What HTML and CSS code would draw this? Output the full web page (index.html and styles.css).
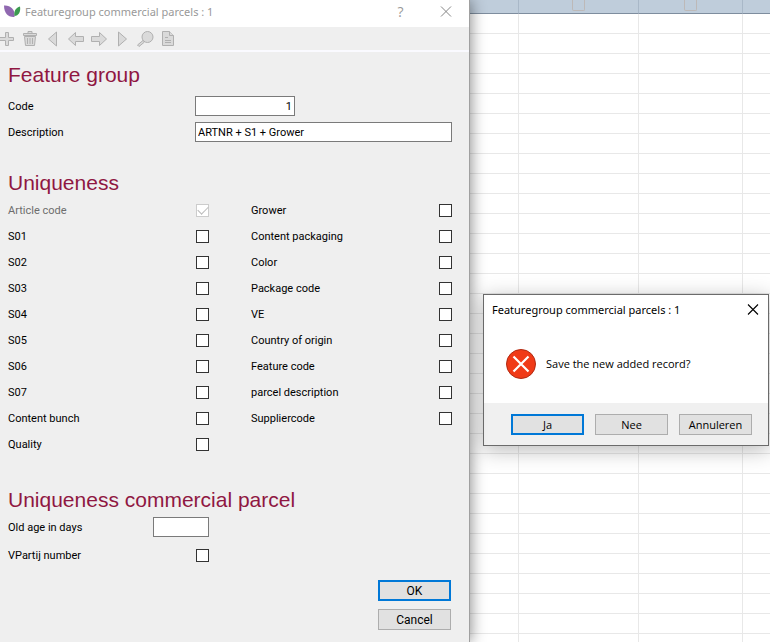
FILE: index.html
```
<!DOCTYPE html>
<html lang="en">
<head>
<meta charset="utf-8">
<title>Featuregroup commercial parcels : 1</title>
<link rel="stylesheet" href="styles.css">
</head>
<body>
<div class="desktop">
  <main class="window">
    <header class="titlebar">
      <svg class="logo" width="17" height="13" viewBox="0 0 17 13" aria-hidden="true">
        <path d="M0 0.500C6 0 11.500 4 10.500 12C4 12.500 0 8 0 0.500Z" fill="#9068b0"/>
        <path d="M16 1.500C17 6.500 14.500 11 10.500 11C9.500 6 12 2.500 16 1.500Z" fill="#3c9b50"/>
      </svg>
      <h1 class="title">Featuregroup commercial parcels : 1</h1>
      <button class="caption-btn help" type="button">?</button>
      <button class="caption-btn" type="button" aria-label="Close">
        <svg width="12" height="12" viewBox="0 0 12 12"><path d="M1 .500l10 10M11 .500l-10 10" fill="none" stroke="#858585"/></svg>
      </button>
    </header>
    <nav class="toolbar" aria-label="Record">
      <button type="button" aria-label="Add"><svg viewBox="0 0 15 16"><path d="M5.500 1.500h3v5h5v3h-5v5h-3v-5h-6v-3h6z"/></svg></button>
      <button type="button" aria-label="Delete"><svg viewBox="0 0 15 16"><path d="M1.500 5.500h11l-1 9h-9z"/><path d="M.5 2.500h13v2h-13zM5 2V.500h4V2M4.500 7v6M7 7v6M9.500 7v6"/></svg></button>
      <button type="button" aria-label="First"><svg viewBox="0 0 15 16"><path d="M10.500 1v14L2.500 8z"/></svg></button>
      <button type="button" aria-label="Previous"><svg viewBox="0 0 15 16"><path d="M-.5 8L6.500 1.500v4h8v5h-8v4z"/></svg></button>
      <button type="button" aria-label="Next"><svg viewBox="0 0 15 16"><path d="M14.500 8L7.500 1.500v4h-8v5h8v4z"/></svg></button>
      <button type="button" aria-label="Last"><svg viewBox="0 0 15 16"><path d="M3.500 1v14L11.500 8z"/></svg></button>
      <button type="button" aria-label="Search"><svg viewBox="0 0 15 16"><path d="M5 9.500L-.5 14l1.500 1.500L6.500 11z"/><circle cx="9.500" cy="6" r="5.500"/></svg></button>
      <button type="button" aria-label="Report"><svg viewBox="0 0 15 16"><path d="M1.500.500h7l4 4v10h-11z"/><path d="M8.500.500v4h4M4 6.500h3M4 9.500h6M4 11.500h6"/></svg></button>
    </nav>
    <form class="form">
      <section class="group">
        <h2>Feature group</h2>
        <div class="pairs">
          <label for="code">Code</label><input class="box code" id="code" type="text" value="1">
          <label for="desc">Description</label><input class="box" id="desc" type="text" value="ARTNR + S1 + Grower">
        </div>
      </section>
      <section class="group unique">
        <h2>Uniqueness</h2>
        <div class="columns">
          <div class="column">
            <label class="row off">Article code<input type="checkbox" checked disabled></label>
            <label class="row">S01<input type="checkbox"></label>
            <label class="row">S02<input type="checkbox"></label>
            <label class="row">S03<input type="checkbox"></label>
            <label class="row">S04<input type="checkbox"></label>
            <label class="row">S05<input type="checkbox"></label>
            <label class="row">S06<input type="checkbox"></label>
            <label class="row">S07<input type="checkbox"></label>
            <label class="row">Content bunch<input type="checkbox"></label>
            <label class="row">Quality<input type="checkbox"></label>
          </div>
          <div class="column">
            <label class="row">Grower<input type="checkbox"></label>
            <label class="row">Content packaging<input type="checkbox"></label>
            <label class="row">Color<input type="checkbox"></label>
            <label class="row">Package code<input type="checkbox"></label>
            <label class="row">VE<input type="checkbox"></label>
            <label class="row">Country of origin<input type="checkbox"></label>
            <label class="row">Feature code<input type="checkbox"></label>
            <label class="row">parcel description<input type="checkbox"></label>
            <label class="row">Suppliercode<input type="checkbox"></label>
          </div>
        </div>
      </section>
      <section class="group parcel">
        <h2>Uniqueness commercial parcel</h2>
        <div class="columns">
          <div class="column">
            <label class="row">Old age in days<input class="box days" type="text"></label>
            <label class="row">VPartij number<input type="checkbox"></label>
          </div>
        </div>
      </section>
      <div class="actions">
        <button class="btn primary" type="button">OK</button>
        <button class="btn" type="button">Cancel</button>
      </div>
    </form>
  </main>

  <div class="sheet">
    <table>
      <colgroup><col class="c1"><col class="c2"><col class="c3"><col></colgroup>
      <thead><tr><th></th><th><input type="checkbox" aria-label="Select column"></th><th><input type="checkbox" aria-label="Select column"></th><th></th></tr></thead>
      <tbody>
        <tr><td></td><td></td><td></td><td></td></tr><tr><td></td><td></td><td></td><td></td></tr>
        <tr><td></td><td></td><td></td><td></td></tr><tr><td></td><td></td><td></td><td></td></tr>
        <tr><td></td><td></td><td></td><td></td></tr><tr><td></td><td></td><td></td><td></td></tr>
        <tr><td></td><td></td><td></td><td></td></tr><tr><td></td><td></td><td></td><td></td></tr>
        <tr><td></td><td></td><td></td><td></td></tr><tr><td></td><td></td><td></td><td></td></tr>
        <tr><td></td><td></td><td></td><td></td></tr><tr><td></td><td></td><td></td><td></td></tr>
        <tr><td></td><td></td><td></td><td></td></tr><tr><td></td><td></td><td></td><td></td></tr>
        <tr><td></td><td></td><td></td><td></td></tr><tr><td></td><td></td><td></td><td></td></tr>
        <tr><td></td><td></td><td></td><td></td></tr><tr><td></td><td></td><td></td><td></td></tr>
        <tr><td></td><td></td><td></td><td></td></tr><tr><td></td><td></td><td></td><td></td></tr>
        <tr><td></td><td></td><td></td><td></td></tr><tr><td></td><td></td><td></td><td></td></tr>
        <tr><td></td><td></td><td></td><td></td></tr><tr><td></td><td></td><td></td><td></td></tr>
        <tr><td></td><td></td><td></td><td></td></tr><tr><td></td><td></td><td></td><td></td></tr>
        <tr><td></td><td></td><td></td><td></td></tr><tr><td></td><td></td><td></td><td></td></tr>
        <tr><td></td><td></td><td></td><td></td></tr><tr><td></td><td></td><td></td><td></td></tr>
        <tr><td></td><td></td><td></td><td></td></tr><tr><td></td><td></td><td></td><td></td></tr>
      </tbody>
    </table>
    <div class="dialog" role="alertdialog" aria-labelledby="dlg-title" aria-describedby="dlg-text">
      <header class="dialog-head">
        <h2 id="dlg-title">Featuregroup commercial parcels : 1</h2>
        <button class="dialog-close" type="button" aria-label="Close">
          <svg width="12" height="12" viewBox="0 0 12 12"><path d="M1 .500l10 10M11 .500l-10 10" fill="none" stroke="#000" stroke-width="1.100"/></svg>
        </button>
      </header>
      <div class="dialog-body">
        <svg width="30" height="30" viewBox="0 0 30 30" aria-hidden="true">
          <circle cx="15" cy="15" r="14.500" fill="#f03a17" stroke="#b02a12"/>
          <path d="M7.500 7.500l15 15M22.500 7.500l-15 15" stroke="#fff" stroke-width="2.200"/>
        </svg>
        <p id="dlg-text">Save the new added record?</p>
      </div>
      <footer class="dialog-foot">
        <button class="btn primary" type="button">Ja</button>
        <button class="btn" type="button">Nee</button>
        <button class="btn" type="button">Annuleren</button>
      </footer>
    </div>
  </div>
</div>
</body>
</html>
```
FILE: styles.css
```
* { box-sizing: border-box; }

body {
  margin: 0;
  font: 11px/17px Roboto, "Liberation Sans", sans-serif;
  color: #000;
}

h1, h2, p { margin: 0; font-weight: 400; }
button, input { font: inherit; color: inherit; }
svg { display: block; overflow: visible; }

.desktop {
  display: grid;
  grid-template-columns: minmax(min-content, 469fr) 301fr;
  min-height: 100vh;
  overflow: hidden;
}

/* Feature group window */
.window {
  position: relative;
  z-index: 2;
  background: #efefef;
  box-shadow: 1px 0 0 #a0a0a0, 2px 0 14px rgba(0, 0, 0, 0.45);
}

.titlebar {
  display: flex;
  align-items: center;
  height: 27px;
  padding: 0 1px 4px 4px;
  background: #fff;
  color: #999;
}

.title {
  flex: 1;
  margin-left: 4px;
  font: 11px/16px "Noto Sans", "Open Sans", sans-serif;
}

.caption-btn {
  display: grid;
  place-items: center;
  width: 45px;
  height: 22px;
  padding: 0;
  border: 0;
  background: none;
}

.help { font: 14px/16px "Open Sans", sans-serif; }

.toolbar {
  display: flex;
  align-items: center;
  gap: 8px;
  height: 25px;
  border-bottom: 2px solid #fafaff;
}

.toolbar button {
  width: 15px;
  height: 16px;
  padding: 0;
  border: 0;
  background: none;
}

.toolbar svg {
  width: 15px;
  height: 16px;
  fill: #dadada;
  stroke: #b0b0b0;
}

.form { padding: 10px 17px 12px 8px; }

.group h2 {
  font: 21px/26px "Liberation Sans", Arial, sans-serif;
  color: #8f1742;
}

.unique { margin-top: 25px; }
.parcel { margin-top: 30px; }

.pairs {
  display: grid;
  grid-template-columns: 187px 1fr;
  grid-auto-rows: 26px;
  align-items: center;
  margin-top: 5px;
}

.box {
  width: 100%;
  height: 20px;
  padding: 0 2px;
  border: 1px solid #7a7a7a;
  background: #fff;
}

.code { width: 100px; text-align: right; }
.days { width: 56px; }

.columns {
  display: grid;
  grid-template-columns: 1fr 1fr;
  column-gap: 42px;
}

.unique .columns { margin-top: 1px; }

.row {
  display: flex;
  align-items: center;
  justify-content: space-between;
  height: 26px;
}

.parcel .row { height: 28px; }
.off { color: #6d6d6d; }

input[type="checkbox"] {
  appearance: none;
  width: 13px;
  height: 13px;
  margin: 0;
  border: 1px solid #333;
  background: #fff;
}

input[type="checkbox"]:disabled {
  display: grid;
  place-items: center;
  border-color: #ccc;
}

input[type="checkbox"]:disabled::before {
  content: "";
  width: 9px;
  height: 5px;
  margin-bottom: 3px;
  border: solid #bbb;
  border-width: 0 0 1px 1px;
  transform: rotate(-45deg);
}

.actions {
  display: flex;
  flex-direction: column;
  align-items: flex-end;
  gap: 8px;
  padding: 11px 1px 0 0;
}

.btn {
  width: 73px;
  height: 21px;
  padding: 0;
  border: 1px solid #adadad;
  background: #e1e1e1;
  line-height: 16px;
}

.actions .btn { font-size: 12px; }

.primary { border: 2px solid #0078d7; }

/* Data sheet behind the windows */
.sheet {
  position: relative;
  min-width: 0;
  overflow: hidden;
  contain: size;
  background: #fff;
}

table {
  width: 100%;
  table-layout: fixed;
  border-collapse: separate;
  border-spacing: 0;
}

.c1 { width: 50px; }
.c2 { width: 120px; }
.c3 { width: 104px; }

th, td {
  height: 20px;
  padding: 0;
  border-right: 1px solid #e8e8e8;
  border-bottom: 1px solid #e8e8e8;
}

th {
  height: 14px;
  border-right-color: #a9b8c8;
  border-bottom-color: #7e8d9e;
  background: #bfcddb;
  line-height: 0;
  vertical-align: top;
}

th:last-child, td:last-child { border-right: 0; }

th input[type="checkbox"] {
  height: 11px;
  border-color: #bdb9b8;
  border-top: 0;
  border-radius: 0 0 2px 2px;
  background: none;
}

/* Confirmation dialog */
.dialog {
  position: absolute;
  top: 294px;
  right: 1px;
  width: 286px;
  border: 1px solid #6b6b6b;
  background: #fff;
  box-shadow: 0 4px 20px rgba(0, 0, 0, 0.28);
  font: 11px/16px "Open Sans", "Noto Sans", sans-serif;
}

.dialog-head {
  display: flex;
  align-items: center;
  justify-content: space-between;
  height: 30px;
  padding: 0 9px 0 8px;
}

.dialog-head h2 { font: 11px/16px "Noto Sans", "Open Sans", sans-serif; }

.dialog-close {
  padding: 0;
  border: 0;
  background: none;
}

.dialog-body {
  display: flex;
  align-items: center;
  gap: 10px;
  height: 78px;
  padding: 0 22px;
}

.dialog-foot {
  display: flex;
  justify-content: flex-end;
  gap: 11px;
  padding: 11px 16px 10px;
  background: #f0f0f0;
}
```
